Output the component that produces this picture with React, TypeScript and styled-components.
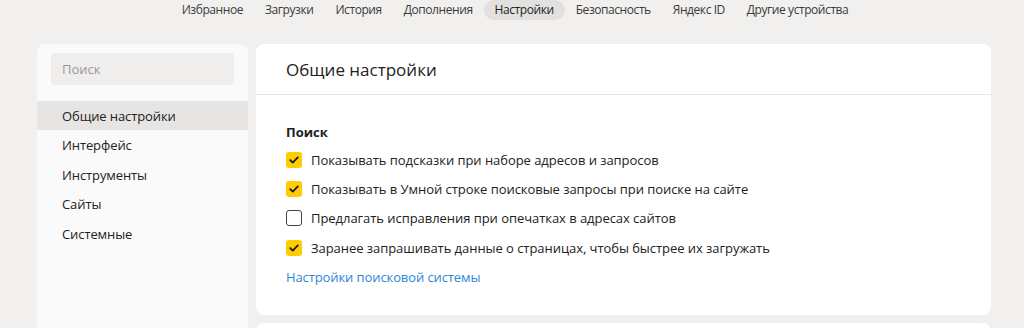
import React from 'react';
import styled, { createGlobalStyle } from 'styled-components';

const GlobalStyle = createGlobalStyle`
  html, body {
    margin: 0;
    padding: 0;
    background: #f1f0ef;
    font-family: 'Open Sans', 'Noto Sans', sans-serif;
    color: #222;
    overflow: hidden;
  }
`;

const navItems = [
  'Избранное',
  'Загрузки',
  'История',
  'Дополнения',
  'Настройки',
  'Безопасность',
  'Яндекс ID',
  'Другие устройства',
];

const menuItems = ['Общие настройки', 'Интерфейс', 'Инструменты', 'Сайты', 'Системные'];

const searchOptions = [
  { label: 'Показывать подсказки при наборе адресов и запросов', checked: true },
  { label: 'Показывать в Умной строке поисковые запросы при поиске на сайте', checked: true },
  { label: 'Предлагать исправления при опечатках в адресах сайтов', checked: false },
  { label: 'Заранее запрашивать данные о страницах, чтобы быстрее их загружать', checked: true },
];

const App = () => {
  return (
    <Page>
      <GlobalStyle />
      <TopNav>
        {navItems.map((item) => (
          <NavItem key={item} $active={item === 'Настройки'}>
            {item}
          </NavItem>
        ))}
      </TopNav>
      <Layout>
        <Sidebar>
          <SearchBox>Поиск</SearchBox>
          <Menu>
            {menuItems.map((item, i) => (
              <MenuItem key={item} $active={i === 0}>
                {item}
              </MenuItem>
            ))}
          </Menu>
        </Sidebar>
        <Content>
          <Card>
            <CardHeader>Общие настройки</CardHeader>
            <CardBody>
              <SectionTitle>Поиск</SectionTitle>
              {searchOptions.map((opt) => (
                <OptionRow key={opt.label}>
                  <Checkbox $checked={opt.checked}>
                    {opt.checked && (
                      <svg width="10" height="8" viewBox="0 0 10 8">
                        <path
                          d="M1.2 4.1 L3.8 6.6 L8.8 1.4"
                          fill="none"
                          stroke="#1a1a1a"
                          strokeWidth="1.8"
                          strokeLinecap="round"
                          strokeLinejoin="round"
                        />
                      </svg>
                    )}
                  </Checkbox>
                  {opt.label}
                </OptionRow>
              ))}
              <Link>Настройки поисковой системы</Link>
            </CardBody>
          </Card>
          <Card />
        </Content>
      </Layout>
    </Page>
  );
};

export default App;

const Page = styled.div`
  width: 1024px;
  height: 328px;
  overflow: hidden;
`;

const TopNav = styled.nav`
  display: flex;
  justify-content: center;
  align-items: center;
  height: 20px;
  padding-left: 6px;
`;

const NavItem = styled.div<{ $active?: boolean }>`
  padding: 0 11px;
  height: 20px;
  line-height: 20px;
  border-radius: 10px;
  font-size: 12px;
  letter-spacing: -0.43px;
  color: ${({ $active }) => ($active ? '#1f1f1f' : '#3a3a3a')};
  background: ${({ $active }) => ($active ? '#e2e1df' : 'transparent')};
  white-space: nowrap;
`;

const Layout = styled.div`
  display: flex;
  gap: 8px;
  padding: 24px 33px 0 37px;
`;

const Sidebar = styled.aside`
  width: 211px;
  flex-shrink: 0;
  height: 300px;
  background: #fafafa;
  border-radius: 8px 8px 0 0;
  padding-top: 9px;
  box-sizing: border-box;
`;

const SearchBox = styled.div`
  margin: 0 14px;
  height: 32px;
  line-height: 32px;
  padding: 0 11px;
  border-radius: 4px;
  background: #efeeed;
  color: #999;
  font-size: 13px;
`;

const Menu = styled.ul`
  list-style: none;
  margin: 16px 0 0;
  padding: 0;
`;

const MenuItem = styled.li<{ $active?: boolean }>`
  height: 29.4px;
  line-height: 31px;
  padding-left: 25px;
  font-size: 13px;
  letter-spacing: -0.1px;
  color: #222;
  background: ${({ $active }) => ($active ? '#e6e5e4' : 'transparent')};
`;

const Content = styled.main`
  flex: 1;
  display: flex;
  flex-direction: column;
  gap: 8px;
`;

const Card = styled.section`
  background: #fff;
  border-radius: 8px;
  min-height: 60px;
`;

const CardHeader = styled.h2`
  margin: 0;
  height: 50px;
  line-height: 52px;
  padding: 0 30px;
  font-size: 17px;
  font-weight: 400;
  color: #222;
  border-bottom: 1px solid #e6e6e6;
`;

const CardBody = styled.div`
  padding: 27px 30px 25px;
  display: flex;
  flex-direction: column;
  align-items: flex-start;
`;

const SectionTitle = styled.div`
  font-size: 13px;
  font-weight: 700;
  color: #222;
  height: 20px;
  line-height: 20px;
  margin-bottom: 3px;
`;

const OptionRow = styled.label`
  display: flex;
  align-items: center;
  gap: 9px;
  height: 29.3px;
  font-size: 13px;
  letter-spacing: -0.05px;
  color: #222;
`;

const Checkbox = styled.span<{ $checked: boolean }>`
  width: 16px;
  height: 16px;
  flex-shrink: 0;
  box-sizing: border-box;
  border-radius: 3px;
  display: flex;
  align-items: center;
  justify-content: center;
  background: ${({ $checked }) => ($checked ? '#ffcc00' : '#fff')};
  border: ${({ $checked }) => ($checked ? 'none' : '1.5px solid #444')};
`;

const Link = styled.a`
  margin-top: 2px;
  height: 26px;
  line-height: 26px;
  font-size: 13px;
  letter-spacing: -0.1px;
  color: #2d86d4;
  cursor: pointer;
`;
